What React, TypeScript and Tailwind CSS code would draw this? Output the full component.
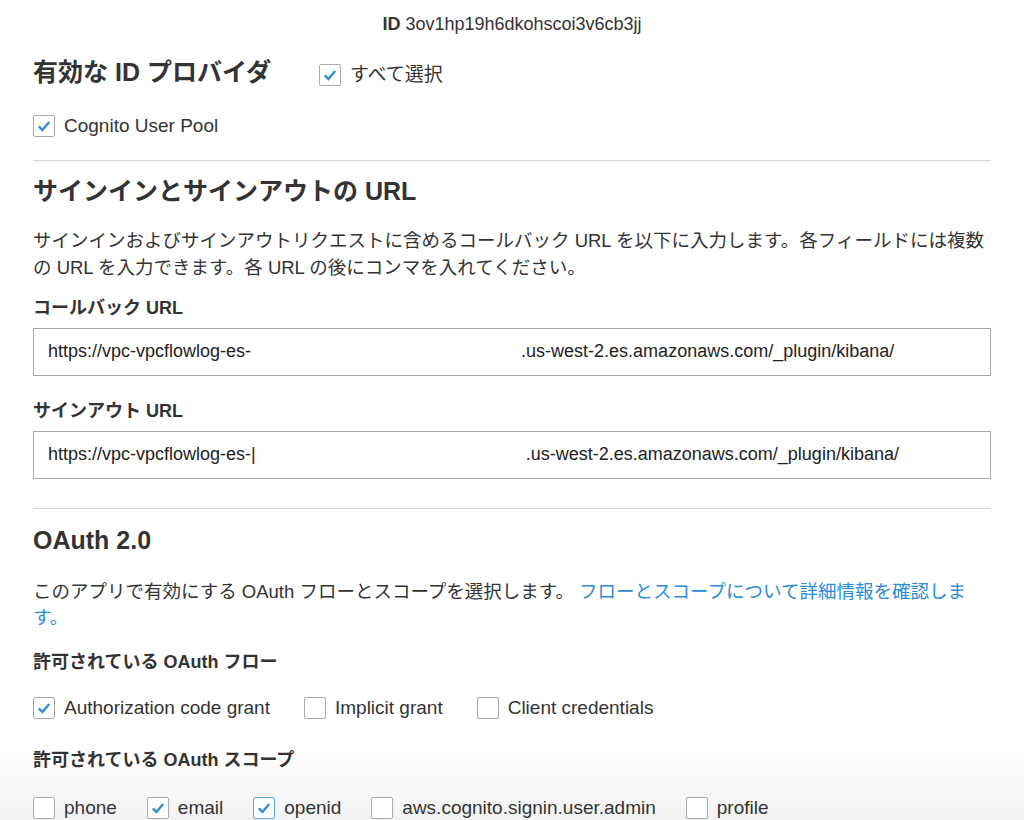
const font = { fontFamily: '"Liberation Sans", "Noto Sans CJK JP", sans-serif' };

function Box({ checked, focus }: { checked?: boolean; focus?: boolean }) {
  return (
    <span
      className={`flex h-[22px] w-[22px] shrink-0 items-center justify-center rounded-[2px] border bg-white ${
        focus ? "border-[#5fa8dd]" : "border-[#a9a9a9]"
      }`}
    >
      {checked && (
        <svg viewBox="0 0 20 20" className="h-[16px] w-[16px]">
          <path d="M3.5 10.5 L8 15 L16.5 5" fill="none" stroke="#2f8fd8" strokeWidth="3" />
        </svg>
      )}
    </span>
  );
}

function Check({ label, checked, focus }: { label: string; checked?: boolean; focus?: boolean }) {
  return (
    <label className="flex items-center gap-[9px] text-[19px] text-[#333]">
      <Box checked={checked} focus={focus} />
      {label}
    </label>
  );
}

function UrlInput({ value, tail }: { value: string; tail: string }) {
  return (
    <div className="flex h-[48px] items-center border border-[#a9a9a9] bg-white px-[14px] text-[18px] text-[#222]">
      <span>{value}</span>
      <span className="w-[270px]" />
      <span>{tail}</span>
    </div>
  );
}

export default function App() {
  return (
    <div className="min-h-[820px] w-[1024px] bg-white pl-[33px] pr-[33px]" style={font}>
      <div className="pt-[11px] text-center text-[18px] text-[#333]">
        <span className="font-bold">ID</span> 3ov1hp19h6dkohscoi3v6cb3jj
      </div>
      <div className="mt-[16px] flex items-center">
        <h2 className="text-[25px] font-bold text-[#333]">有効な ID プロバイダ</h2>
        <div className="ml-[48px] mt-[4px]">
          <Check label="すべて選択" checked />
        </div>
      </div>
      <div className="mt-[20px]">
        <Check label="Cognito User Pool" checked />
      </div>
      <hr className="mt-[20px] border-[#d5d5d5]" />
      <h2 className="mt-[12px] text-[25px] font-bold text-[#333]">サインインとサインアウトの URL</h2>
      <p className="mt-[16px] text-[18.5px] leading-[27px] text-[#333]">
        サインインおよびサインアウトリクエストに含めるコールバック URL を以下に入力します。各フィールドには複数の URL を入力できます。各 URL の後にコンマを入れてください。
      </p>
      <div className="mt-[14px] text-[18px] font-bold text-[#333]">コールバック URL</div>
      <div className="mt-[6px]">
        <UrlInput value="https://vpc-vpcflowlog-es-" tail=".us-west-2.es.amazonaws.com/_plugin/kibana/" />
      </div>
      <div className="mt-[22px] text-[18px] font-bold text-[#333]">サインアウト URL</div>
      <div className="mt-[6px]">
        <UrlInput value="https://vpc-vpcflowlog-es-|" tail=".us-west-2.es.amazonaws.com/_plugin/kibana/" />
      </div>
      <hr className="mt-[29px] border-[#d5d5d5]" />
      <h2 className="mt-[13px] text-[25px] font-bold text-[#333]">OAuth 2.0</h2>
      <p className="mt-[20px] text-[18.5px] leading-[26px] text-[#333]">
        このアプリで有効にする OAuth フローとスコープを選択します。{" "}
        <span className="text-[#2a8bd6]">フローとスコープについて詳細情報を確認します。</span>
      </p>
      <div className="mt-[18px] text-[18px] font-bold text-[#333]">許可されている OAuth フロー</div>
      <div className="mt-[18px] flex gap-[34px]">
        <Check label="Authorization code grant" checked />
        <Check label="Implicit grant" />
        <Check label="Client credentials" />
      </div>
      <div className="-mx-[33px] mt-[24px] bg-gradient-to-b from-white to-[#f1f1f1] px-[33px] pb-[6px]">
        <div className="text-[18px] font-bold text-[#333]">許可されている OAuth スコープ</div>
        <div className="mt-[20px] flex gap-[30px]">
          <Check label="phone" />
          <Check label="email" checked />
          <Check label="openid" checked focus />
          <Check label="aws.cognito.signin.user.admin" />
          <Check label="profile" />
        </div>
      </div>
    </div>
  );
}
